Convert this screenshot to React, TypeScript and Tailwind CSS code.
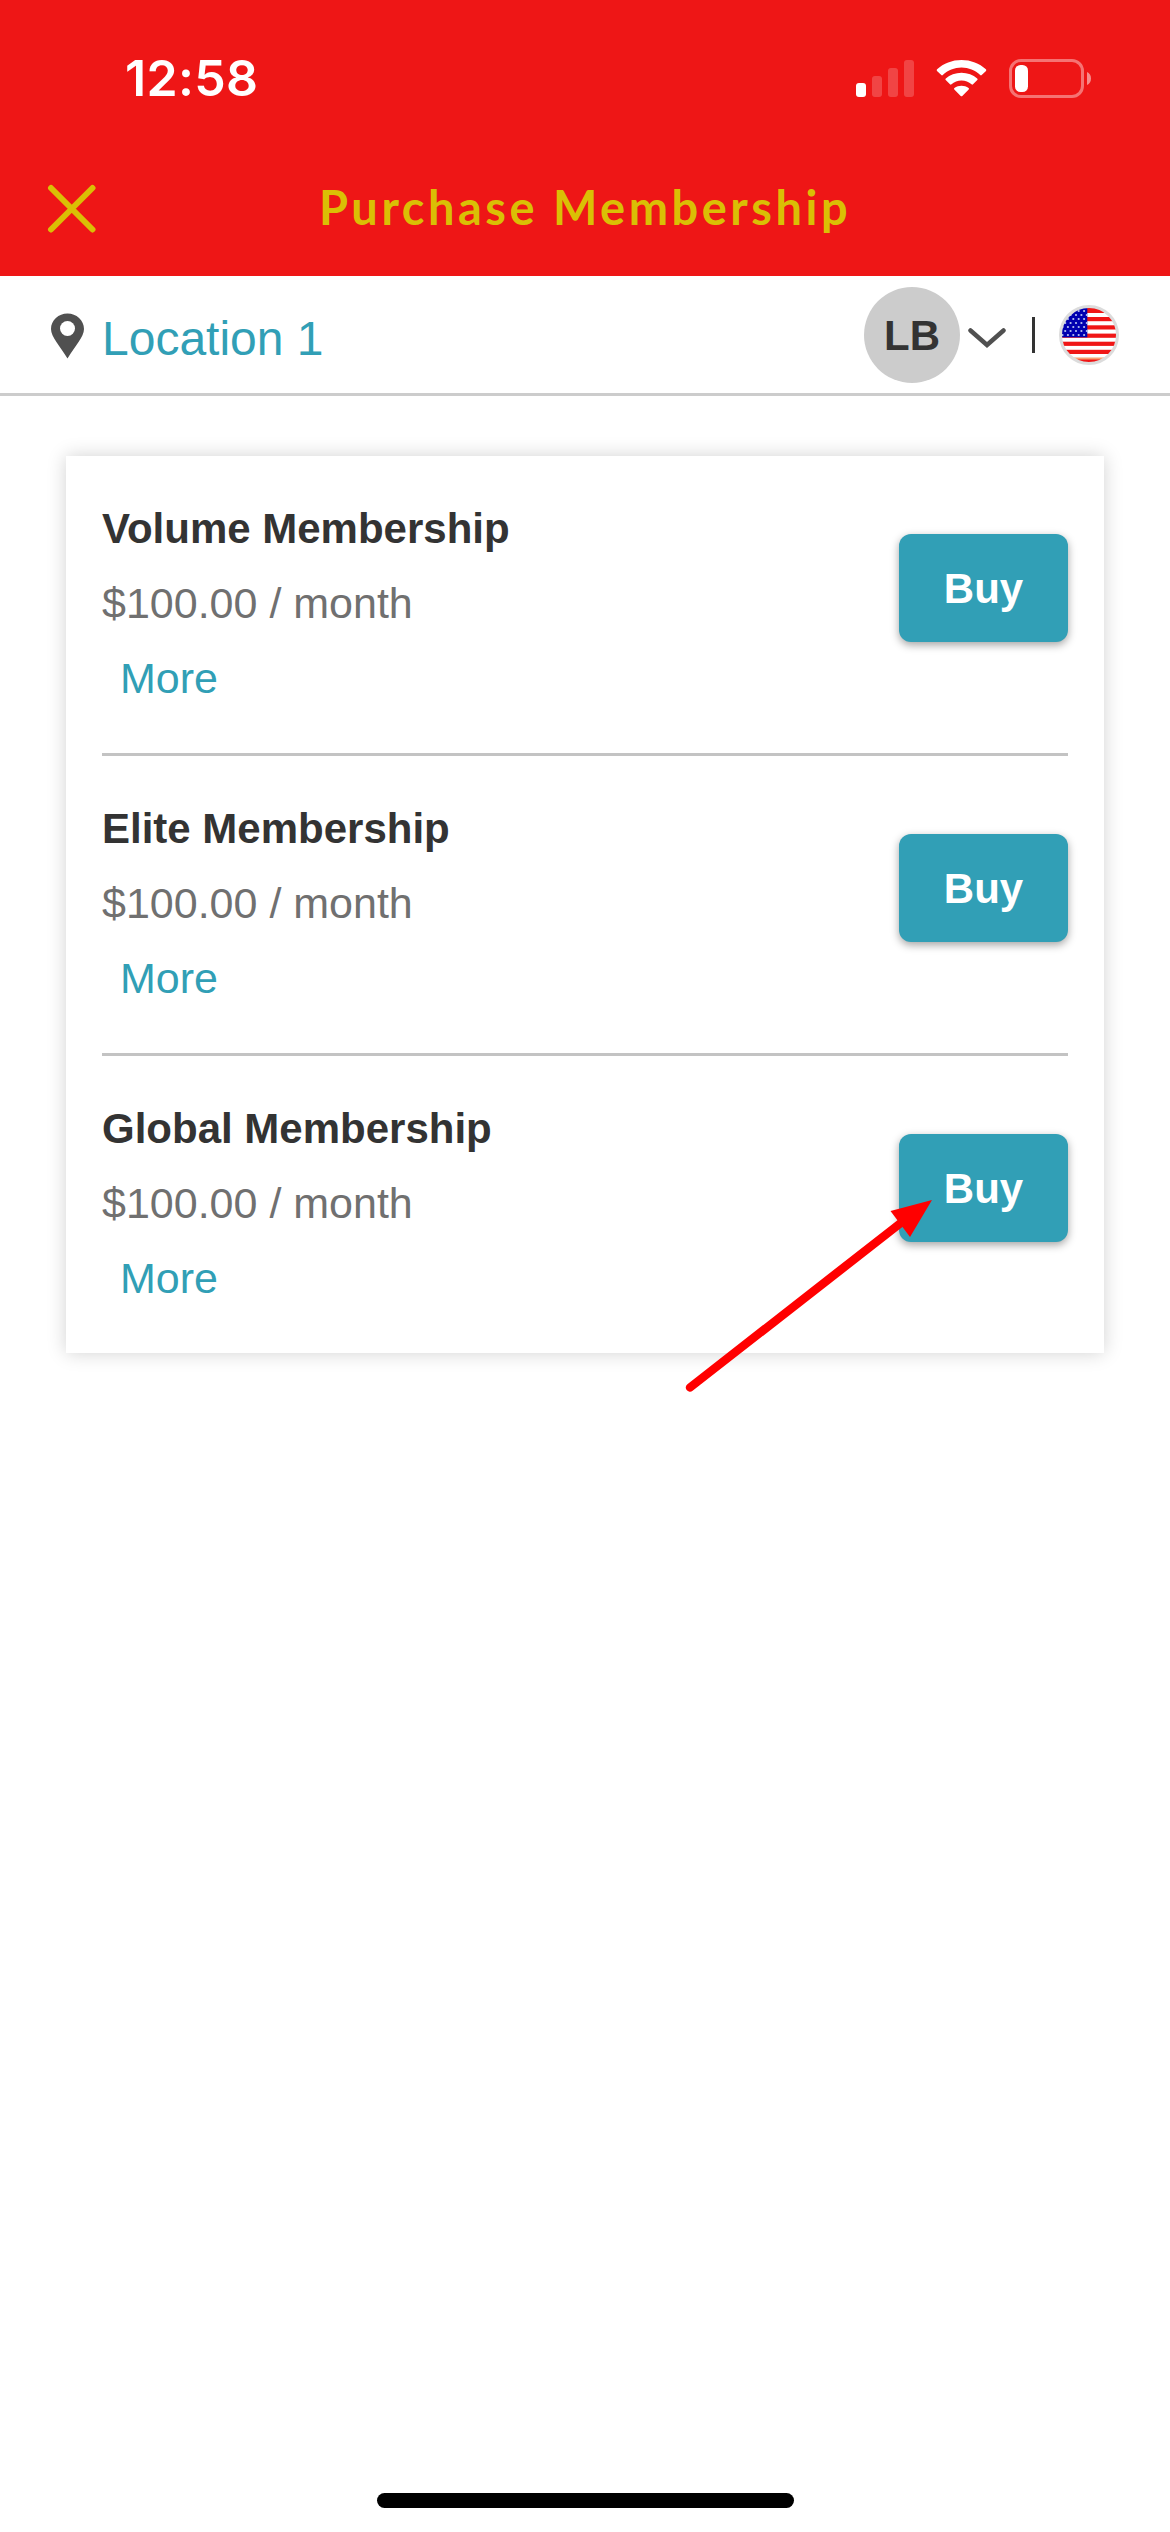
const memberships = [
  { name: "Volume Membership", price: "$100.00 / month" },
  { name: "Elite Membership", price: "$100.00 / month" },
  { name: "Global Membership", price: "$100.00 / month" },
];

const StatusBar = () => {
  return (
    <div className="flex h-[156px] items-center justify-between pl-[125px] pr-[78px]">
      <span className="font-['Inter',sans-serif] text-[50px] leading-none font-semibold tracking-[0.3px] text-white">
        12:58
      </span>
      <div className="flex items-center">
        <svg width="58" height="37" viewBox="0 0 58 37" fill="#fff">
          <rect x="0" y="23" width="10" height="14" rx="3" />
          <rect x="16" y="16" width="10" height="21" rx="3" opacity="0.2" />
          <rect x="32" y="8" width="10" height="29" rx="3" opacity="0.2" />
          <rect x="48" y="0" width="10" height="37" rx="3" opacity="0.2" />
        </svg>
        <svg className="ml-[22px]" width="51" height="37" viewBox="0 0 51 37" fill="#fff">
          <path d="M25.5 7.6C32.6 7.6 39.2 10.4 44.2 15.1Q45 15.8 45.7 15.1L50 10.9Q50.7 10.1 49.9 9.3C43.4 3.4 34.9 0 25.5 0S7.6 3.4 1.1 9.3Q.3 10.1 1 10.9L5.3 15.1Q6 15.8 6.8 15.1C11.8 10.4 18.4 7.6 25.5 7.6Z" />
          <path d="M25.5 20.4C29.3 20.4 32.9 21.9 35.5 24.3Q36.3 25 37 24.3L41.3 20.1Q42.1 19.3 41.2 18.5C37.1 14.8 31.6 12.7 25.5 12.7S13.9 14.8 9.8 18.5Q8.9 19.3 9.7 20.1L14 24.3Q14.7 25 15.5 24.3C18.1 21.9 21.7 20.4 25.5 20.4Z" />
          <path d="M32.7 29.5Q33.4 28.7 32.6 28C28.5 24.9 22.5 24.9 18.4 28Q17.6 28.7 18.3 29.5L24.7 35.9Q25.5 36.8 26.3 35.9Z" />
        </svg>
        <svg className="ml-[22px]" width="83" height="39" viewBox="0 0 83 39">
          <rect x="1.5" y="1.5" width="72" height="36" rx="10.5" fill="none" stroke="#fff" strokeWidth="3" opacity="0.4" />
          <rect x="6" y="6" width="13" height="27" rx="5.5" fill="#fff" />
          <path d="M78 13C80.5 14 82 16.5 82 19.5S80.5 25 78 26Z" fill="#fff" opacity="0.5" />
        </svg>
      </div>
    </div>
  );
};

const TitleBar = () => {
  return (
    <div className="grid h-[120px] grid-cols-[120px_1fr_120px] items-center pb-[14px]">
      <svg className="ml-[47px]" width="50" height="50" viewBox="0 0 50 50" stroke="#dabf05" strokeWidth="6" strokeLinecap="round">
        <path d="M4 4L45.5 45.5M45.5 4L4 45.5" />
      </svg>
      <h1 className="pb-[3px] text-center font-['Lato',sans-serif] text-[47px] leading-none font-bold tracking-[3.5px] whitespace-nowrap text-[#dabf05]">
        Purchase Membership
      </h1>
    </div>
  );
};

const Flag = () => {
  const stars = [];
  for (let row = 0; row < 7; row++) {
    for (let col = 0; col < 5; col++) {
      stars.push(
        <circle key={`${row}-${col}`} cx={2.5 + col * 5.4 + (row % 2 ? 2.7 : 0)} cy={3 + row * 4} r="1.1" />
      );
    }
  }
  return (
    <svg className="ml-6" width="60" height="60" viewBox="0 0 60 60">
      <defs>
        <clipPath id="flag-circle">
          <circle cx="30" cy="30" r="28" />
        </clipPath>
      </defs>
      <g clipPath="url(#flag-circle)">
        <rect width="60" height="60" fill="#fff" />
        <g fill="#f01616">
          <rect x="0" y="3" width="60" height="5" />
          <rect x="0" y="12" width="60" height="4.2" />
          <rect x="0" y="20.3" width="60" height="4.2" />
          <rect x="0" y="28.6" width="60" height="4.2" />
          <rect x="0" y="36.7" width="60" height="4.2" />
          <rect x="0" y="44.8" width="60" height="4.2" />
          <rect x="0" y="54" width="60" height="4" />
        </g>
        <rect x="0" y="52.5" width="60" height="2" fill="#f8a070" />
        <rect x="0" y="3" width="28.3" height="29.3" fill="#0000b0" />
        <g transform="translate(1 3)" fill="#b8c4f0">{stars}</g>
      </g>
      <circle cx="30" cy="30" r="28.5" fill="none" stroke="#dcdcdc" strokeWidth="3" />
    </svg>
  );
};

const LocationBar = () => {
  return (
    <div className="flex h-[120px] items-center justify-between border-b-[3px] border-[#ccc] pr-[51px] pl-[51px]">
      <div className="flex items-center">
        <svg className="mt-[3px]" width="33" height="46" viewBox="0 0 33 46">
          <path d="M16.5 .5C7.6 .5 0 7.3 0 16C0 24 9 33 16.5 45.5C24 33 33 24 33 16C33 7.3 25.4 .5 16.5 .5Z" fill="#505050" />
          <circle cx="16.5" cy="15.5" r="7.5" fill="#fff" />
        </svg>
        <span className="mt-2 ml-[18px] text-[48px] leading-none text-[#319fb6]">Location 1</span>
      </div>
      <div className="flex items-center pt-px">
        <div className="flex size-24 items-center justify-center rounded-full bg-[#ccc] text-[42px] font-bold text-[#333]">
          LB
        </div>
        <svg className="mt-[6px] ml-2" width="38" height="20" viewBox="0 0 38 20" fill="none" stroke="#505050" strokeWidth="4.5" strokeLinecap="round">
          <path d="M2.5 2.5L19 17L35.5 2.5" />
        </svg>
        <div className="ml-[26px] h-9 w-[3px] bg-[#333]"></div>
        <Flag />
      </div>
    </div>
  );
};

const App = () => {
  return (
    <div className="relative flex h-[2532px] w-[1170px] flex-col overflow-hidden bg-white font-['Liberation_Sans',Arial,sans-serif]">
      <header className="bg-[#ee1616]">
        <StatusBar />
        <TitleBar />
      </header>
      <LocationBar />

      <main className="mx-[66px] mt-[60px] bg-white px-9 shadow-[0_0_18px_rgba(0,0,0,0.18)]">
        {memberships.map((item) => (
          <div
            key={item.name}
            className="flex h-[300px] items-start justify-between border-b-[3px] border-[#c3c3c3] last:h-[297px] last:border-b-0"
          >
            <div className="pt-[35px] text-[43px] leading-[75px]">
              <h2 className="text-[42px] leading-[75px] font-bold text-[#333]">{item.name}</h2>
              <p className="text-[#707070]">{item.price}</p>
              <a href="#" className="ml-[18px] block text-[#319fb6]">
                More
              </a>
            </div>
            <button className="mt-[78px] h-[108px] w-[169px] rounded-xl bg-[#319fb6] text-[42px] font-bold text-white shadow-[0_3px_9px_rgba(0,0,0,0.36)]">
              Buy
            </button>
          </div>
        ))}
      </main>

      {/* pointer to the last Buy button */}
      <svg className="absolute top-[1190px] left-[680px]" width="260" height="210" viewBox="680 1190 260 210">
        <path d="M690 1387.5L902 1222" stroke="#f00" strokeWidth="8.5" strokeLinecap="round" />
        <path d="M932 1200L890.5 1211L910 1237Z" fill="#f00" />
      </svg>

      <div className="mx-auto mt-auto mb-6 h-[15px] w-[417px] rounded-full bg-black"></div>
    </div>
  );
};

export default App;
